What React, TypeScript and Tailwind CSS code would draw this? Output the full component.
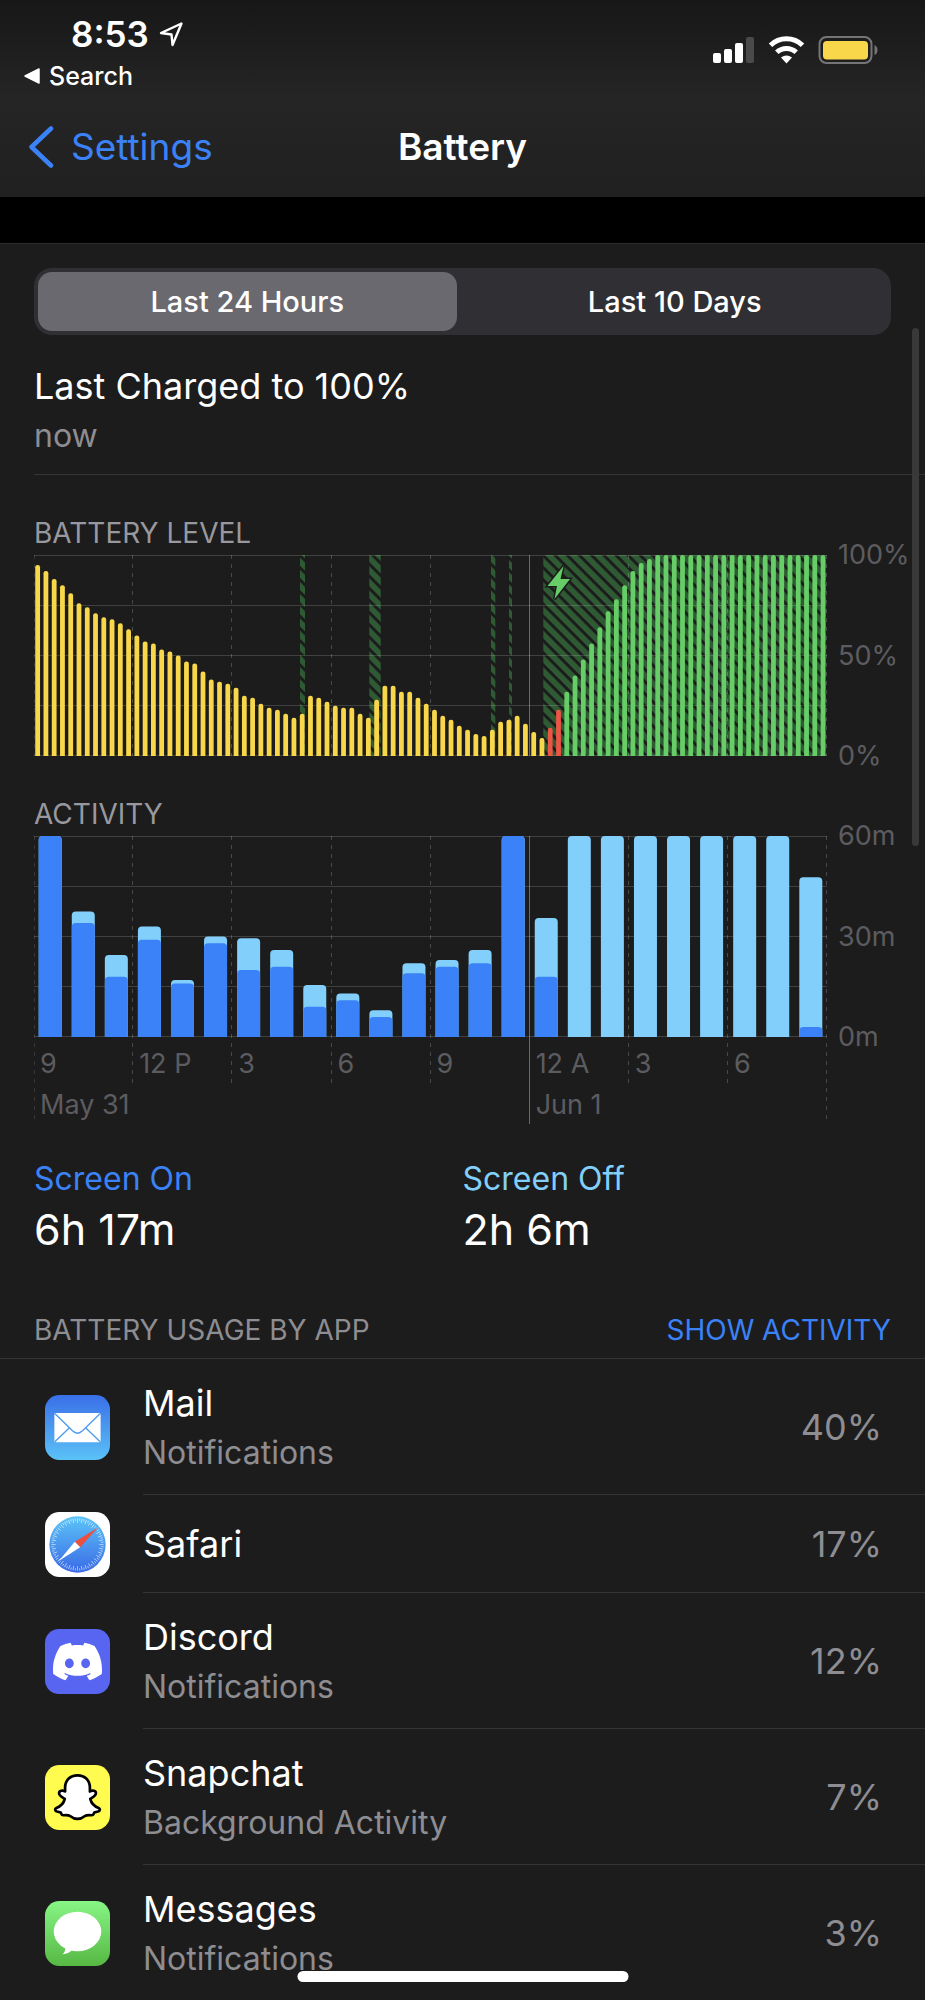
import { useState } from "react";
import type { ReactNode } from "react";
import { SiDiscord } from "react-icons/si";

const HOUR = 33.07;
const CHART_H = 201;

const levels = [
  95, 92, 88, 85, 81, 76, 74, 71, 69, 68, 66, 63, 60, 57, 56, 53, 52, 50, 47, 46,
  42, 38, 37, 36, 34, 30, 29, 26, 24, 23, 21, 19, 21, 30, 29, 27, 25, 24, 24, 21,
  19, 28, 35, 35, 32, 32, 29, 26, 23, 20, 18, 15, 13, 11, 10, 13, 17, 18, 20, 16,
  12, 9, 14, 23, 32, 40, 48, 56, 64, 72, 78, 85, 92, 96, 98,
  100, 100, 100, 100, 100, 100, 100, 100, 100, 100, 100, 100, 100, 100, 100, 100,
  100, 100, 100, 100, 100,
];

const charging = [
  { x: 266, w: 5 },
  { x: 335.3, w: 11.4 },
  { x: 457, w: 4.3 },
  { x: 475, w: 3 },
  { x: 509.3, w: 282.7 },
];

// [total minutes, minutes with screen on] per hour
const activity: [number, number][] = [
  [60, 60], [37.5, 34], [24.5, 18], [33, 29], [17, 16], [30, 28], [29.5, 20],
  [26, 21], [15.5, 9], [13, 11], [8, 6], [22, 19], [23, 21], [26, 22], [60, 60],
  [35.5, 18], [60, 0], [60, 0], [60, 0], [60, 0], [60, 0], [60, 0], [60, 0],
  [47.7, 3],
];

function roundedTop(x: number, y: number, w: number, bottom: number, r: number) {
  const rr = Math.min(r, bottom - y);
  return `M${x} ${bottom}V${y + rr}Q${x} ${y} ${x + rr} ${y}H${x + w - rr}Q${x + w} ${y} ${x + w} ${y + rr}V${bottom}Z`;
}

function GridLines() {
  return (
    <g stroke="#ffffff" strokeOpacity="0.16" strokeWidth="1">
      {[0, 1, 2, 3, 4].map((i) => (
        <line key={i} x1="0" x2="793" y1={i * 50 + 0.5} y2={i * 50 + 0.5} />
      ))}
    </g>
  );
}

function HourLines({ ends }: { ends: number[] }) {
  return (
    <g>
      {ends.map((end, i) => {
        const x = Math.min(792.5, Math.max(0.5, Math.round(i * 3 * HOUR) - 0.5));
        const midnight = i === 5;
        return (
          <line
            key={i}
            x1={x}
            x2={x}
            y1="0"
            y2={end}
            stroke="#ffffff"
            strokeOpacity={midnight ? 0.34 : i === 0 ? 0.12 : 0.2}
            strokeDasharray={midnight ? undefined : "4 5"}
          />
        );
      })}
    </g>
  );
}

function LevelChart() {
  return (
    <svg
      className="h-[201px] min-w-0 flex-1"
      viewBox="0 0 793 201"
      preserveAspectRatio="none"
      role="img"
      aria-label="Battery level"
    >
      <defs>
        <pattern
          id="hatch"
          width="8.6"
          height="8.6"
          patternUnits="userSpaceOnUse"
          patternTransform="rotate(-45)"
        >
          <rect width="5.6" height="8.6" fill="#2f5b34" />
        </pattern>
      </defs>
      {charging.map((c) => (
        <rect key={c.x} x={c.x} y="0" width={c.w} height={CHART_H} fill="url(#hatch)" />
      ))}
      <GridLines />
      <HourLines ends={[201, 201, 201, 201, 201, 201, 201, 201, 201]} />
      {levels.map((v, i) => {
        const color = i < 62 ? "#f8d74a" : i < 64 ? "#eb5545" : "#67ce67";
        const x = (i * HOUR) / 4 + 1.25;
        return (
          <path
            key={i}
            fill={color}
            d={roundedTop(x, CHART_H - (v * CHART_H) / 100, 4.8, CHART_H, 2.2)}
          />
        );
      })}
      <path
        d="M529.500 11L513.500 31H523L520.500 44L536 24H526.500Z"
        fill="#67ce67"
        stroke="#1c1c1e"
        strokeWidth="3"
        paintOrder="stroke"
      />
    </svg>
  );
}

function ActivityChart() {
  return (
    <svg
      className="absolute inset-0 h-full w-full"
      viewBox="0 0 793 288"
      preserveAspectRatio="none"
      role="img"
      aria-label="Activity"
    >
      <GridLines />
      <HourLines ends={[288, 251, 251, 251, 251, 288, 251, 251, 288]} />
      {activity.map(([total, on], i) => {
        const x = 4.7 + i * HOUR;
        const y = (m: number) => CHART_H - (m / 60) * CHART_H;
        return (
          <g key={i}>
            <path fill="#82cffb" d={roundedTop(x, y(total), 23, CHART_H, 4)} />
            {on > 0 && <path fill="#3b82f8" d={roundedTop(x, y(on), 23, CHART_H, 4)} />}
          </g>
        );
      })}
    </svg>
  );
}

function YAxis({ labels }: { labels: string[] }) {
  return (
    <div className="-mt-[15px] flex h-[231px] w-[98px] shrink-0 flex-col justify-between pl-[11px] text-[27px] leading-[30px] text-[#5c5c60]">
      {labels.map((l) => (
        <span key={l}>{l}</span>
      ))}
    </div>
  );
}

function IconFrame({ children }: { children: ReactNode }) {
  return (
    <svg viewBox="0 0 194 194" className="size-[65px] shrink-0" aria-hidden="true">
      {children}
    </svg>
  );
}

function MailIcon() {
  return (
    <IconFrame>
      <linearGradient id="mail" x1="0" y1="0" x2="0" y2="1">
        <stop offset="0" stopColor="#3a6fe8" />
        <stop offset="1" stopColor="#5bc2f7" />
      </linearGradient>
      <rect width="194" height="194" rx="43" fill="url(#mail)" />
      <rect x="28" y="54" width="138" height="87" rx="5" fill="#fff" />
      <g fill="none" stroke="#4c9cf0" strokeWidth="4">
        <path d="M30 56L82 107Q97 121 112 107L164 56" />
        <path d="M30 139L73 98M164 139L121 98" />
      </g>
    </IconFrame>
  );
}

function SafariIcon() {
  return (
    <IconFrame>
      <linearGradient id="safari" x1="0" y1="0" x2="0" y2="1">
        <stop offset="0" stopColor="#5cc4f8" />
        <stop offset="1" stopColor="#3a6ae6" />
      </linearGradient>
      <rect width="194" height="194" rx="43" fill="#fff" />
      <circle cx="97" cy="97" r="84" fill="url(#safari)" />
      <g stroke="#fff" strokeOpacity="0.8" strokeWidth="2">
        {Array.from({ length: 72 }, (_, i) => (
          <line
            key={i}
            x1="97"
            x2="97"
            y1="19"
            y2={i % 2 ? 26 : 32}
            transform={`rotate(${i * 5} 97 97)`}
          />
        ))}
      </g>
      <path d="M158 46L89 89L105 105Z" fill="#eb4f3d" />
      <path d="M41 146L89 89L105 105Z" fill="#fff" />
    </IconFrame>
  );
}

function DiscordIcon() {
  return (
    <span className="flex size-[65px] shrink-0 items-center justify-center rounded-[14px] bg-[#5865f0]">
      <SiDiscord className="size-[49px] text-white" aria-hidden="true" />
    </span>
  );
}

function SnapchatIcon() {
  return (
    <IconFrame>
      <rect width="194" height="194" rx="43" fill="#fffc4f" />
      <path
        d="M97 31C75 31 60 46 60 67V79C52 74 42 77 42 84C42 92 52 96 59 101C56 114 45 124 34 128C28 131 30 137 36 139L47 142C49 146 49 150 55 150C63 149 69 148 76 153C83 159 88 161 97 161C106 161 111 159 118 153C125 148 131 149 139 150C145 150 145 146 147 142L158 139C164 137 166 131 160 128C149 124 138 114 135 101C142 96 152 92 152 84C152 77 142 74 134 79V67C134 46 119 31 97 31Z"
        fill="#fff"
        stroke="#000"
        strokeWidth="8"
        strokeLinejoin="round"
      />
    </IconFrame>
  );
}

function MessagesIcon() {
  return (
    <IconFrame>
      <linearGradient id="messages" x1="0" y1="0" x2="0" y2="1">
        <stop offset="0" stopColor="#87f586" />
        <stop offset="1" stopColor="#57b843" />
      </linearGradient>
      <rect width="194" height="194" rx="43" fill="url(#messages)" />
      <ellipse cx="97" cy="91" rx="71" ry="59" fill="#fff" />
      <path d="M60 135C62 147 58 154 52 159C66 158 76 153 82 145Z" fill="#fff" />
    </IconFrame>
  );
}

const apps = [
  { name: "Mail", note: "Notifications", pct: "40%", icon: <MailIcon /> },
  { name: "Safari", note: "", pct: "17%", icon: <SafariIcon /> },
  { name: "Discord", note: "Notifications", pct: "12%", icon: <DiscordIcon /> },
  { name: "Snapchat", note: "Background Activity", pct: "7%", icon: <SnapchatIcon /> },
  { name: "Messages", note: "Notifications", pct: "3%", icon: <MessagesIcon /> },
];

function StatusIcons() {
  return (
    <svg
      width="166"
      height="28"
      viewBox="0 0 166 28"
      className="mt-[36px] mr-[47px]"
      role="img"
      aria-label="Signal, Wi-Fi and battery"
    >
      <g fill="#fff">
        <rect x="1" y="17" width="8" height="10" rx="2" />
        <rect x="12" y="13" width="8" height="14" rx="2" />
        <rect x="23" y="7" width="8" height="20" rx="2" />
        <rect x="34" y="1" width="8" height="26" rx="2" fill="#4a4a4a" />
      </g>
      <g fill="none" stroke="#fff" strokeWidth="5">
        <path d="M58.500 9.300A23 23 0 0 1 90.500 9.300" />
        <path d="M64.800 16.300A14 14 0 0 1 84.200 16.300" />
      </g>
      <path d="M69 21.500Q74.500 17.500 80 21.500L74.500 27.500Z" fill="#fff" />
      <rect x="107.500" y="1" width="52" height="26" rx="7" fill="none" stroke="#757577" strokeWidth="2" />
      <rect x="111" y="5" width="45" height="18.500" rx="4" fill="#f8d74a" />
      <path d="M162.500 9Q165.500 10.500 165.500 14Q165.500 17.500 162.500 19Z" fill="#757577" />
    </svg>
  );
}

export default function App() {
  const [range, setRange] = useState("Last 24 Hours");
  return (
    <div className="relative min-h-screen overflow-hidden bg-[#1c1c1c] font-[Inter,'Liberation_Sans',sans-serif] text-white">
      <header className="bg-linear-to-b from-[#171717] via-[#252525] to-[#202020]">
        <div className="flex justify-between">
          <div className="pt-[14px]">
            <div className="flex items-center gap-[10px] pl-[71px] text-[35px] leading-[40px] font-semibold">
              <span>8:53</span>
              <svg width="25" height="26" viewBox="0 0 25 26" aria-hidden="true">
                <path
                  d="M22.500 2.500L2 12L12.500 13.500L13.500 24Z"
                  fill="none"
                  stroke="#fff"
                  strokeWidth="2.400"
                  strokeLinejoin="round"
                />
              </svg>
            </div>
            <a
              href="#search"
              className="mt-[7px] flex items-center gap-[9px] pl-[24px] text-[25px] leading-[30px] font-medium"
            >
              <svg width="16" height="16" viewBox="0 0 16 16" aria-hidden="true">
                <path d="M1 8L15 1V15Z" fill="#fff" stroke="#fff" strokeWidth="1.500" strokeLinejoin="round" />
              </svg>
              Search
            </a>
          </div>
          <StatusIcons />
        </div>
        <nav className="mt-[6px] grid h-[100px] grid-cols-[1fr_auto_1fr] items-center text-[37px] leading-[44px]">
          <a href="#settings" className="flex items-center gap-[17px] pl-[28px] text-[#3b82f7]">
            <svg width="26" height="44" viewBox="0 0 26 44" aria-hidden="true">
              <path
                d="M23 3.500L3.500 22L23 40.500"
                fill="none"
                stroke="currentColor"
                strokeWidth="4.500"
                strokeLinecap="round"
                strokeLinejoin="round"
              />
            </svg>
            Settings
          </a>
          <h1 className="font-semibold">Battery</h1>
        </nav>
      </header>
      <div className="h-[46px] bg-black" />

      <main className="border-t border-[#2c2c2c] pt-[24px]">
        <div className="mx-[34px] grid grid-cols-2 rounded-[18px] bg-[#303034] p-[4px] text-[29px] font-medium">
          {["Last 24 Hours", "Last 10 Days"].map((r) => (
            <button
              key={r}
              type="button"
              aria-pressed={range === r}
              onClick={() => setRange(r)}
              className={
                range === r
                  ? "mr-[6px] h-[59px] rounded-[14px] bg-[#6a696f]"
                  : "h-[59px] rounded-[14px]"
              }
            >
              {r}
            </button>
          ))}
        </div>

        <section className="ml-[34px] border-b border-[#343436] pt-[29px] pb-[18px]">
          <h2 className="text-[36px] leading-[44px]">Last Charged to 100%</h2>
          <p className="mt-[8px] text-[32px] leading-[40px] text-[#8d8d92]">now</p>
        </section>

        <section className="pt-[41px] pl-[34px]">
          <h2 className="text-[28px] leading-[34px] text-[#98989e]">BATTERY LEVEL</h2>
          <div className="mt-[5px] flex h-[201px]">
            <LevelChart />
            <YAxis labels={["100%", "50%", "0%"]} />
          </div>
        </section>

        <section className="pt-[41px] pl-[34px]">
          <h2 className="text-[28px] leading-[34px] text-[#98989e]">ACTIVITY</h2>
          <div className="mt-[5px] flex">
            <div className="relative h-[288px] min-w-0 flex-1 pt-[213px] text-[27px] leading-[30px] text-[#5c5c60]">
              <ActivityChart />
              <div className="grid grid-cols-8">
                {["9", "12 P", "3", "6", "9", "12 A", "3", "6"].map((h, i) => (
                  <span key={i} className="pl-[6px]">
                    {h}
                  </span>
                ))}
              </div>
              <div className="mt-[11px] grid grid-cols-8">
                <span className="col-span-5 pl-[6px]">May 31</span>
                <span className="col-span-3 pl-[6px]">Jun 1</span>
              </div>
            </div>
            <YAxis labels={["60m", "30m", "0m"]} />
          </div>
        </section>

        <dl className="mx-[34px] mt-[35px] grid grid-cols-2">
          <div>
            <dt className="text-[32px] leading-[40px] text-[#3b82f7]">Screen On</dt>
            <dd className="mt-[4px] text-[43px] leading-[52px]">6h 17m</dd>
          </div>
          <div>
            <dt className="text-[32px] leading-[40px] text-[#82cffb]">Screen Off</dt>
            <dd className="mt-[4px] text-[43px] leading-[52px]">2h 6m</dd>
          </div>
        </dl>

        <section className="mt-[58px]">
          <div className="flex justify-between border-b border-[#343436] px-[34px] pb-[11px] text-[28px] leading-[34px]">
            <h2 className="text-[#8d8d92]">BATTERY USAGE BY APP</h2>
            <button type="button" className="text-[#3b82f7]">
              SHOW ACTIVITY
            </button>
          </div>
          <ul>
            {apps.map((a, i) => (
              <li
                key={a.name}
                className={
                  a.note
                    ? "flex h-[136px] items-center gap-[33px] pl-[45px]"
                    : "flex h-[98px] items-center gap-[33px] pl-[45px]"
                }
              >
                {a.icon}
                <div
                  className={
                    i < apps.length - 1
                      ? "flex h-full flex-1 items-center justify-between border-b border-[#343436] pr-[43px]"
                      : "flex h-full flex-1 items-center justify-between pr-[43px]"
                  }
                >
                  <div>
                    <h3 className="text-[36px] leading-[44px]">{a.name}</h3>
                    {a.note && (
                      <p className="mt-[8px] text-[32px] leading-[40px] text-[#8d8d92]">{a.note}</p>
                    )}
                  </div>
                  <span className="text-[36px] leading-[44px] text-[#8d8d92]">{a.pct}</span>
                </div>
              </li>
            ))}
          </ul>
        </section>
      </main>

      <div className="absolute top-[328px] right-[6px] h-[518px] w-[7px] rounded-full bg-[#39393a]" />
      <div className="fixed bottom-[18px] left-1/2 h-[11px] w-[331px] -translate-x-1/2 rounded-full bg-white" />
    </div>
  );
}
